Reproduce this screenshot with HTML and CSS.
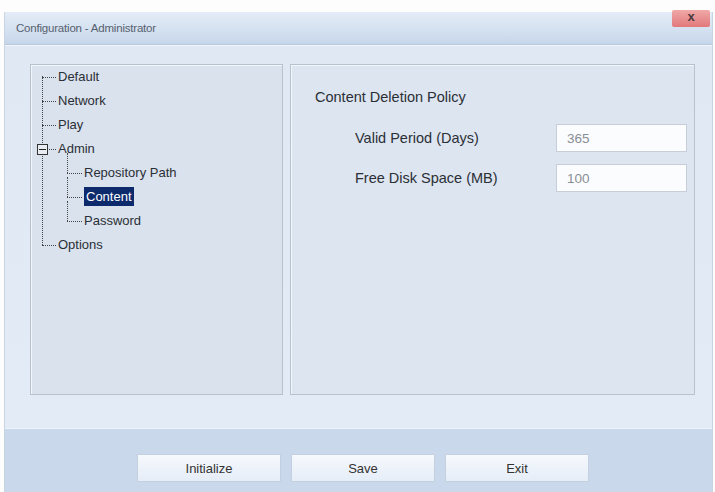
FILE: index.html
```html
<!DOCTYPE html>
<html>
<head>
	<meta http-equiv="Content-Type" content="text/html; charset=UTF-8">
	<title>Configuration - Administrator</title>
	<link rel="stylesheet" href="styles.css">
</head>
<body>
<div class="window">
	<div class="titlebar">
		<span class="title">Configuration - Administrator</span>
		<span class="closebtn">x</span>
	</div>
	<div class="content">
		<div class="panel treepanel">
			<ul class="tree">
				<li class="node">Default</li>
				<li class="node">Network</li>
				<li class="node">Play</li>
				<li class="node open"><span class="toggle"></span>Admin</li>
				<li class="child">Repository Path</li>
				<li class="child"><span class="selected">Content</span></li>
				<li class="child last">Password</li>
				<li class="node">Options</li>
			</ul>
		</div>
		<div class="panel formpanel">
			<p class="heading">Content Deletion Policy</p>
			<div class="field">
				<label for="period">Valid Period (Days)</label>
				<input type="text" id="period" value="365">
			</div>
			<div class="field">
				<label for="disk">Free Disk Space (MB)</label>
				<input type="text" id="disk" value="100">
			</div>
		</div>
	</div>
	<div class="bottombar">
		<button class="btn">Initialize</button>
		<button class="btn">Save</button>
		<button class="btn">Exit</button>
	</div>
</div>
</body>
</html>
```

FILE: styles.css
```css
body {
	margin: 0;
	background: #fdfdfe;
	font-family: "Liberation Sans", Arial, sans-serif;
	color: #2b2f36;
}
.window {
	position: relative;
	margin: 12px 2px 0 4px;
	height: 480px;
	display: flex;
	flex-direction: column;
	border-left: 1px solid #c9d4e2;
	border-right: 1px solid #c9d4e2;
	background: #e0e8f3;
}
.titlebar {
	height: 32px;
	display: flex;
	align-items: center;
	padding-left: 11px;
	background: linear-gradient(#e4ecf7, #d3e0f0 60%, #c6d6ea);
	border-bottom: 1px solid #b9c8db;
}
.title {
	font-size: 11.5px;
	letter-spacing: -0.2px;
	color: #56616f;
}
.closebtn {
	position: absolute;
	top: -2px;
	right: 2px;
	width: 38px;
	height: 17px;
	line-height: 14px;
	text-align: center;
	font-weight: bold;
	font-size: 13px;
	color: #4a3a3e;
	background: linear-gradient(#f0a8a8, #e2787b);
	border-radius: 2px;
}
.content {
	flex: 1;
	display: flex;
	gap: 7px;
	padding: 18px 17px 0 25px;
	background: linear-gradient(#e0e8f3, #e3ebf6);
	border-top: 1px solid #f3f6fb;
}
.panel {
	height: 329px;
	background: #dae2ed;
	border: 1px solid #b8c2cf;
	box-shadow: 1px 1px 0 #f2f5fa inset;
}
.treepanel {
	width: 251px;
}
.formpanel {
	flex: 1;
	background: #dde5f0;
}

/* tree */
.tree {
	position: relative;
	list-style: none;
	margin: 0;
	padding: 0;
	font-size: 13px;
}
.tree::before {
	content: "";
	position: absolute;
	left: 11px;
	top: 11px;
	height: 169px;
	border-left: 1px dotted #444;
}
.tree li {
	position: relative;
	height: 24px;
	line-height: 24px;
}
.tree .node {
	padding-left: 27px;
}
.tree .node::before {
	content: "";
	position: absolute;
	left: 11px;
	top: 12px;
	width: 14px;
	border-top: 1px dotted #444;
}
.tree .child {
	padding-left: 53px;
}
.tree .child::before {
	content: "";
	position: absolute;
	left: 36px;
	top: 12px;
	width: 15px;
	border-top: 1px dotted #444;
}
.tree .child::after {
	content: "";
	position: absolute;
	left: 36px;
	top: -8px;
	height: 20px;
	border-left: 1px dotted #444;
}
.toggle {
	position: absolute;
	left: 6px;
	top: 7px;
	width: 9px;
	height: 9px;
	border: 1px solid #333;
	background: #e8edf4;
	z-index: 1;
}
.toggle::after {
	content: "";
	position: absolute;
	left: 1px;
	top: 4px;
	width: 7px;
	border-top: 1px solid #222;
}
.selected {
	background: #0d2a6c;
	color: #fff;
	padding: 2px 2px;
}

/* form */
.heading {
	margin: 24px 0 13px 24px;
	font-size: 14.5px;
}
.field {
	display: flex;
	align-items: center;
	height: 40px;
	padding-left: 64px;
}
.field label {
	width: 201px;
	font-size: 14.5px;
}
.field input {
	width: 119px;
	height: 26px;
	padding: 0 0 0 10px;
	border: 1px solid #c7ced8;
	background: #fbfcfd;
	font-family: "Liberation Sans", Arial, sans-serif;
	font-size: 13.5px;
	color: #8a8f96;
}

/* buttons */
.bottombar {
	height: 64px;
	display: flex;
	align-items: flex-start;
	gap: 10px;
	padding: 25px 0 0 132px;
	box-sizing: border-box;
	background: #c9d8ea;
	border-top: 1px solid #eef3f9;
}
.btn {
	width: 144px;
	height: 28px;
	font-family: "Liberation Sans", Arial, sans-serif;
	font-size: 13px;
	color: #333;
	background: linear-gradient(#f6f9fd, #e5edf7);
	border: 1px solid #c4d0df;
	border-radius: 1px;
}
```
